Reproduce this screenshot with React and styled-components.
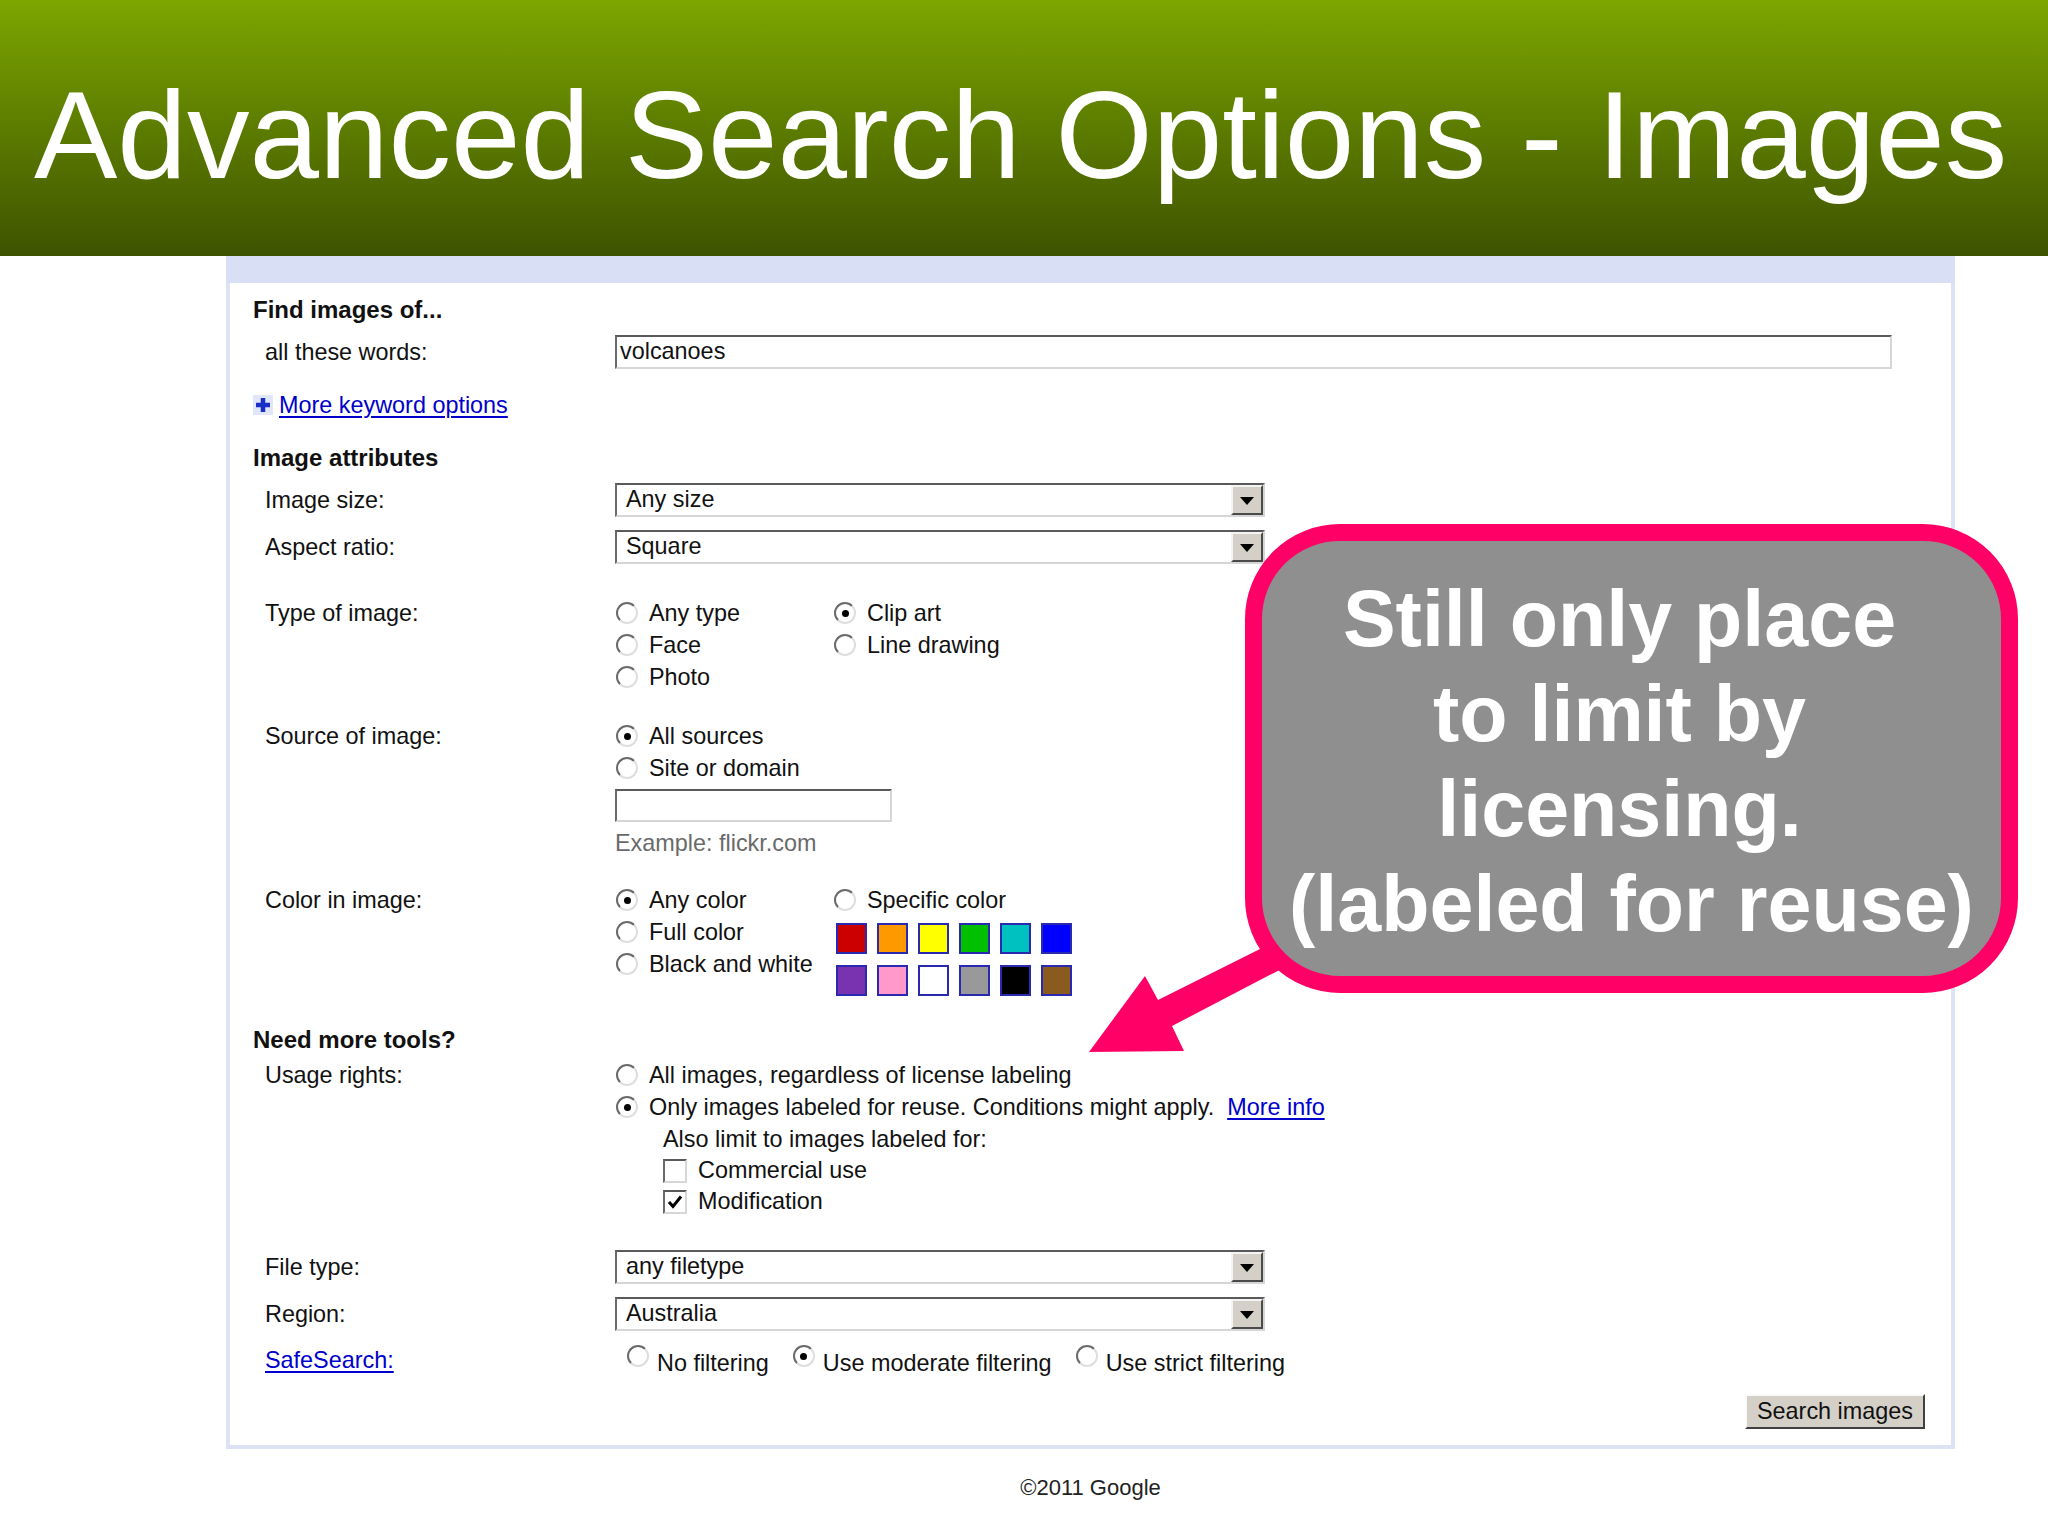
import React from "react";
import styled, { createGlobalStyle } from "styled-components";

const Global = createGlobalStyle`
  html, body { margin: 0; padding: 0; background: #fff; }
  body { font-family: "Liberation Sans", Arial, sans-serif; color: #111; }
`;

const Page = styled.div`
  position: relative;
  width: 2048px;
  height: 1536px;
  overflow: hidden;
  background: #fff;
`;

const Header = styled.header`
  height: 256px;
  box-sizing: border-box;
  padding: 72px 0 0 34px;
  background: linear-gradient(to bottom, #7da600 0%, #5f8000 45%, #3e5300 100%);
`;

const Title = styled.h1`
  margin: 0;
  font-family: "Liberation Sans", Arial, sans-serif;
  font-weight: normal;
  font-size: 125px;
  line-height: 125px;
  color: #fff;
  white-space: nowrap;
`;

const Main = styled.main`
  margin-left: 226px;
  width: 1729px;
`;

const Panel = styled.section`
  border: 4px solid #dde3f5;
  border-top: none;
`;

const Band = styled.div`
  height: 27px;
  margin: 0 -4px;
  background: #d9dff4;
`;

const Body = styled.div`
  padding: 11px 0 16px 23px;
  font-size: 23.4px;
  color: #111;
`;

const Heading = styled.div`
  font-weight: bold;
  font-size: 24px;
  line-height: 32px;
  margin-top: ${(p) => p.$mt || 0}px;
`;

const FieldRow = styled.div`
  display: grid;
  grid-template-columns: 362px 1fr;
  align-items: ${(p) => p.$align || "center"};
  margin-top: ${(p) => p.$mt || 0}px;
`;

const Label = styled.div`
  padding-left: 12px;
  line-height: 32px;
  white-space: nowrap;
`;

const LinkLabel = styled.a`
  color: #0000cc;
  text-decoration: underline;
  text-underline-offset: 3px;
  margin-left: ${(p) => p.$ml || 0}px;
`;

const Sunken = styled.div`
  box-sizing: border-box;
  width: ${(p) => p.$w}px;
  height: ${(p) => p.$h || 34}px;
  margin-top: ${(p) => p.$mt || 0}px;
  border-style: solid;
  border-width: 2px;
  border-color: #5a5a5a #d6d6d6 #d6d6d6 #6a6a6a;
  background: #fff;
  display: flex;
  align-items: center;
  padding-left: ${(p) => p.$pl || 0}px;
  line-height: 1;
  white-space: nowrap;
`;

const SelectText = styled.span`
  flex: 1;
  padding-left: 9px;
`;

const DropButton = styled.span`
  width: 32px;
  height: 100%;
  box-sizing: border-box;
  background: #d4d0c8;
  border-style: solid;
  border-width: 2px;
  border-color: #f4f4f4 #4a4a4a #4a4a4a #f4f4f4;
  display: flex;
  align-items: center;
  justify-content: center;
  &::after {
    content: "";
    width: 0;
    height: 0;
    border-left: 7px solid transparent;
    border-right: 7px solid transparent;
    border-top: 8px solid #000;
    margin-top: 2px;
  }
`;

const Select = ({ value }) => (
  <Sunken $w={650}>
    <SelectText>{value}</SelectText>
    <DropButton />
  </Sunken>
);

const Columns = styled.div`
  display: flex;
  align-items: flex-start;
`;

const Col = styled.div`
  display: flex;
  flex-direction: column;
  width: ${(p) => (p.$w ? `${p.$w}px` : "auto")};
`;

const Option = styled.label`
  display: flex;
  align-items: center;
  height: ${(p) => p.$h || 32}px;
  gap: 11px;
  white-space: nowrap;
`;

const RadioCircle = styled.span`
  box-sizing: border-box;
  width: 22px;
  height: 22px;
  border-radius: 50%;
  border: 2px solid;
  border-color: #6a6a6a #dedede #dedede #6a6a6a;
  background: #fff;
  display: flex;
  align-items: center;
  justify-content: center;
  flex: none;
  margin-left: 1px;
  &::after {
    content: "";
    width: 7px;
    height: 7px;
    border-radius: 50%;
    background: ${(p) => (p.$on ? "#000" : "transparent")};
  }
`;

const Radio = ({ on, children, h }) => (
  <Option $h={h}>
    <RadioCircle $on={on} />
    <span>{children}</span>
  </Option>
);

const CheckBox = styled.span`
  box-sizing: border-box;
  width: 24px;
  height: 24px;
  border: 2px solid;
  border-color: #5a5a5a #d6d6d6 #d6d6d6 #6a6a6a;
  background: #fff;
  display: flex;
  align-items: center;
  justify-content: center;
  flex: none;
`;

const Check = ({ on, children }) => (
  <Option $h={31}>
    <CheckBox>
      {on && (
        <svg width="16" height="16" viewBox="0 0 16 16">
          <path d="M2 8 L6 12.5 L14 2.5" fill="none" stroke="#000" strokeWidth="3" />
        </svg>
      )}
    </CheckBox>
    <span>{children}</span>
  </Option>
);

const Sub = styled.div`
  padding-left: 48px;
  display: flex;
  flex-direction: column;
`;

const Line = styled.div`
  line-height: ${(p) => p.$h || 32}px;
  margin-top: ${(p) => p.$mt || 0}px;
  color: ${(p) => p.$color || "inherit"};
  white-space: nowrap;
`;

const Swatches = styled.div`
  display: grid;
  grid-template-columns: repeat(6, 31px);
  grid-auto-rows: 31px;
  column-gap: 10px;
  row-gap: 11px;
  margin-top: 7px;
  margin-left: 3px;
`;

const Swatch = styled.span`
  box-sizing: border-box;
  border: 2px solid #2a2ab0;
  background: ${(p) => p.$c};
`;

const MoreLink = styled.a`
  display: flex;
  align-items: center;
  gap: 6px;
  line-height: 32px;
  color: #0000cc;
  text-decoration: underline;
  text-underline-offset: 3px;
`;

const SafeRow = styled.div`
  display: flex;
  gap: 23px;
  padding-left: 11px;
`;

const SafeOption = styled.label`
  display: flex;
  align-items: flex-start;
  gap: 8px;
  height: 32px;
  white-space: nowrap;
  & > span:last-child {
    line-height: 32px;
    margin-top: 3px;
  }
  & > span:first-child {
    margin-top: 1px;
  }
`;

const ButtonRow = styled.div`
  display: flex;
  justify-content: flex-end;
  padding-right: 26px;
  margin-top: 18px;
`;

const Button = styled.button`
  width: 180px;
  height: 35px;
  box-sizing: border-box;
  background: #d4d0c8;
  border-style: solid;
  border-width: 2px;
  border-color: #fafafa #404040 #404040 #fafafa;
  font-family: "Liberation Sans", Arial, sans-serif;
  font-size: 23.4px;
  color: #111;
  padding: 0;
`;

const Footer = styled.div`
  text-align: center;
  font-size: 22px;
  line-height: 30px;
  margin-top: 24px;
  color: #222;
`;

const ArrowSvg = styled.svg`
  position: absolute;
  left: 1080px;
  top: 920px;
`;

const Callout = styled.div`
  position: absolute;
  left: 1245px;
  top: 524px;
  width: 773px;
  height: 469px;
  box-sizing: border-box;
  border: 17px solid #ff0066;
  border-radius: 95px;
  background: #8f8f8f;
  display: flex;
  flex-direction: column;
  align-items: center;
  justify-content: center;
  text-align: center;
  color: #fff;
  font-family: "Liberation Sans", Arial, sans-serif;
  font-weight: bold;
  font-size: 79px;
  line-height: 95px;
  padding-top: 4px;
`;

const CalloutLine = styled.div`
  white-space: nowrap;
  margin-right: ${(p) => p.$nudge || 0}px;
`;

const PlusIcon = () => (
  <svg width="20" height="20" viewBox="0 0 20 20">
    <rect x="0" y="0" width="20" height="20" fill="#e2e6fb" />
    <path d="M10 3 V17 M3 10 H17" stroke="#1a2fc8" strokeWidth="4.5" />
  </svg>
);

const colors = [
  "#cc0000", "#ff9900", "#ffff00", "#00c000", "#00c0c0", "#0000ff",
  "#7a33b0", "#ff99cc", "#ffffff", "#999999", "#000000", "#8a5a1e",
];

export default function App() {
  return (
    <>
      <Global />
      <Page>
        <Header>
          <Title>Advanced Search Options - Images</Title>
        </Header>
        <Main>
          <Panel>
            <Band />
            <Body>
              <Heading>Find images of...</Heading>
              <FieldRow $mt={9}>
                <Label>all these words:</Label>
                <Sunken $w={1277} $pl={3}>volcanoes</Sunken>
              </FieldRow>
              <FieldRow $mt={20}>
                <MoreLink>
                  <PlusIcon />
                  More keyword options
                </MoreLink>
              </FieldRow>
              <Heading $mt={21}>Image attributes</Heading>
              <FieldRow $mt={9}>
                <Label>Image size:</Label>
                <Select value="Any size" />
              </FieldRow>
              <FieldRow $mt={13}>
                <Label>Aspect ratio:</Label>
                <Select value="Square" />
              </FieldRow>
              <FieldRow $mt={33} $align="start">
                <Label>Type of image:</Label>
                <Columns>
                  <Col $w={218}>
                    <Radio>Any type</Radio>
                    <Radio>Face</Radio>
                    <Radio>Photo</Radio>
                  </Col>
                  <Col>
                    <Radio on>Clip art</Radio>
                    <Radio>Line drawing</Radio>
                  </Col>
                </Columns>
              </FieldRow>
              <FieldRow $mt={27} $align="start">
                <Label>Source of image:</Label>
                <Col>
                  <Radio on>All sources</Radio>
                  <Radio>Site or domain</Radio>
                  <Sunken $w={277} $h={33} $mt={5} />
                  <Line $mt={5} $color="#6a6a6a">Example: flickr.com</Line>
                </Col>
              </FieldRow>
              <FieldRow $mt={25} $align="start">
                <Label>Color in image:</Label>
                <Columns>
                  <Col $w={218}>
                    <Radio on>Any color</Radio>
                    <Radio>Full color</Radio>
                    <Radio>Black and white</Radio>
                  </Col>
                  <Col>
                    <Radio>Specific color</Radio>
                    <Swatches>
                      {colors.map((c) => (
                        <Swatch key={c} $c={c} />
                      ))}
                    </Swatches>
                  </Col>
                </Columns>
              </FieldRow>
              <Heading $mt={28}>Need more tools?</Heading>
              <FieldRow $mt={3} $align="start">
                <Label>Usage rights:</Label>
                <Col>
                  <Radio>All images, regardless of license labeling</Radio>
                  <Option>
                    <RadioCircle $on />
                    <span>Only images labeled for reuse. Conditions might apply.</span>
                    <LinkLabel $ml={2}>More info</LinkLabel>
                  </Option>
                  <Sub>
                    <Line>Also limit to images labeled for:</Line>
                    <Check>Commercial use</Check>
                    <Check on>Modification</Check>
                  </Sub>
                </Col>
              </FieldRow>
              <FieldRow $mt={33}>
                <Label>File type:</Label>
                <Select value="any filetype" />
              </FieldRow>
              <FieldRow $mt={13}>
                <Label>Region:</Label>
                <Select value="Australia" />
              </FieldRow>
              <FieldRow $mt={13}>
                <Label>
                  <LinkLabel>SafeSearch:</LinkLabel>
                </Label>
                <SafeRow>
                  <SafeOption>
                    <RadioCircle />
                    <span>No filtering</span>
                  </SafeOption>
                  <SafeOption>
                    <RadioCircle $on />
                    <span>Use moderate filtering</span>
                  </SafeOption>
                  <SafeOption>
                    <RadioCircle />
                    <span>Use strict filtering</span>
                  </SafeOption>
                </SafeRow>
              </FieldRow>
              <ButtonRow>
                <Button>Search images</Button>
              </ButtonRow>
            </Body>
          </Panel>
          <Footer>©2011 Google</Footer>
        </Main>
        <ArrowSvg width="240" height="140" viewBox="0 0 240 140">
          <polygon
            points="9,132 65,56 78,80 220,9 232,33 92,106 104,131"
            fill="#ff0066"
          />
        </ArrowSvg>
        <Callout>
          <CalloutLine $nudge={24}>Still only place</CalloutLine>
          <CalloutLine $nudge={24}>to limit by</CalloutLine>
          <CalloutLine $nudge={24}>licensing.</CalloutLine>
          <CalloutLine>(labeled for reuse)</CalloutLine>
        </Callout>
      </Page>
    </>
  );
}
